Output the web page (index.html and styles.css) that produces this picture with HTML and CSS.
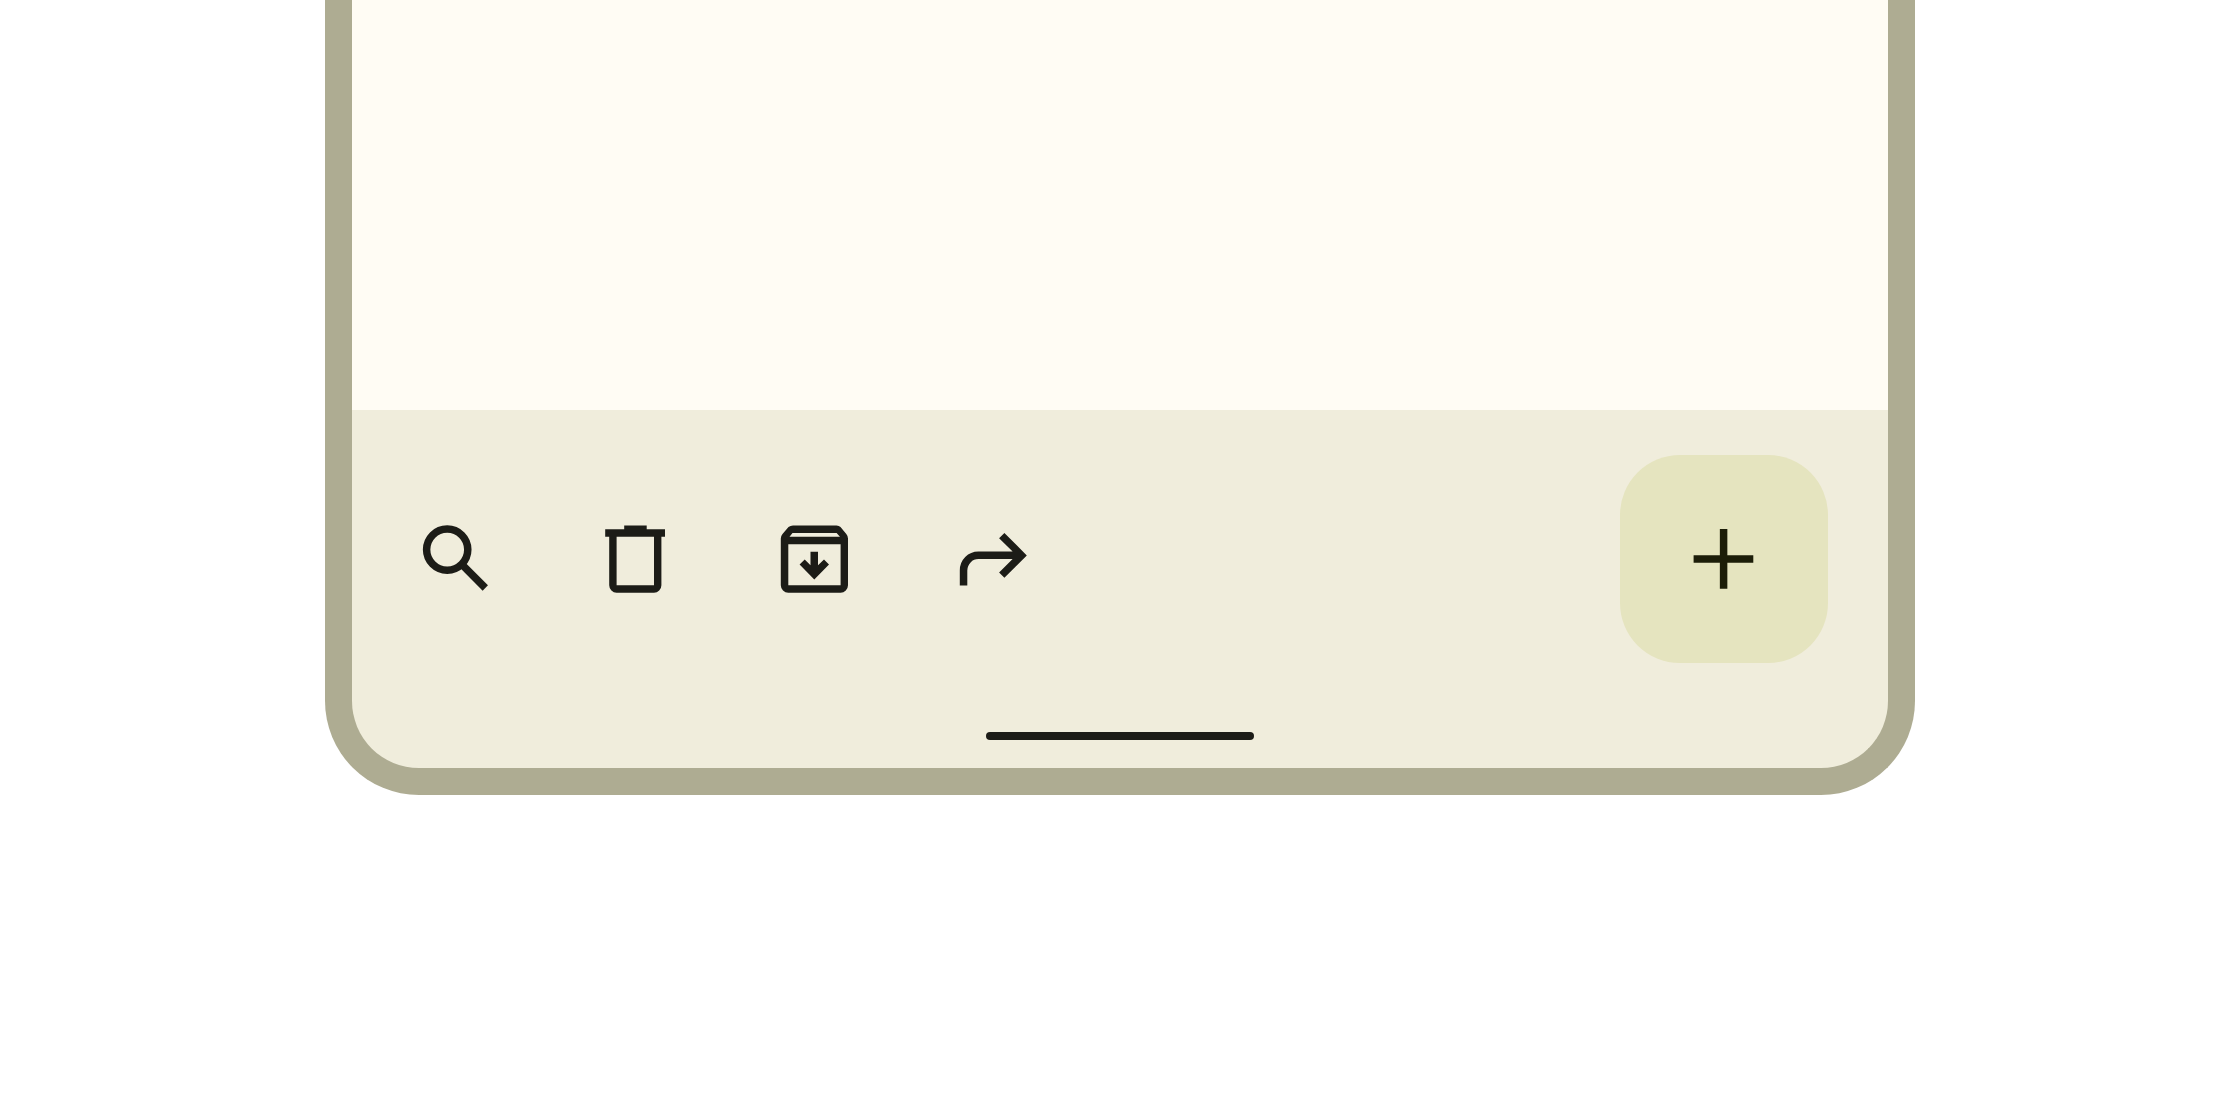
FILE: index.html
```html
<!DOCTYPE html>
<html lang="en">
<head>
<meta charset="utf-8">
<meta name="viewport" content="width=device-width, initial-scale=1">
<title>Bottom app bar</title>
<link rel="stylesheet" href="styles.css">
</head>
<body>
<div class="device">
  <main class="content"></main>
  <footer class="bottom">
    <div class="app-bar">
      <div class="actions">
        <button class="action" type="button" aria-label="Search">
          <svg class="icon" viewBox="0 0 90 90" aria-hidden="true"><g fill="none" stroke="currentColor" stroke-width="7.5"><circle cx="35.2" cy="35.6" r="20.6"/><path d="M49.8 50.4 73.3 74"/></g></svg>
        </button>
        <button class="action" type="button" aria-label="Delete">
          <svg class="icon" viewBox="0 0 90 90" aria-hidden="true"><path fill="currentColor" fill-rule="evenodd" d="M14.2 15.2H33.2V11.5H55.7V15.2H74V22.7H70.4V71.3Q70.4 74.3 68.2 76.5T63 78.7H25.6Q22.6 78.7 20.4 76.5T18.2 71.3V22.7H14.2ZM25.6 22.7V71.3H63V22.7Z"/></svg>
        </button>
        <button class="action" type="button" aria-label="Archive">
          <svg class="icon" viewBox="0 0 90 90" aria-hidden="true"><path fill="currentColor" fill-rule="evenodd" d="M23 11.4H66.5Q69 11.4 70.5 13.1L76.3 20Q78 22 78 24.6V71.3Q78 74.3 75.8 76.5T70.6 78.7H18.3Q15.2 78.7 13 76.5T10.8 71.3V24.6Q10.8 22 12.5 20L18.5 13.1Q20.4 11.4 23 11.4ZM22.5 18.9 19.5 22.8H70L66.6 18.9ZM18.3 30.2V71.3H70.6V30.2Z"/><path fill="currentColor" d="M40.5 37.7H48V51.2L54 45.5 59 50.5 44.3 65.5 29.6 50.5 34.7 45.5 40.5 51.2Z"/></svg>
        </button>
        <button class="action" type="button" aria-label="Forward">
          <svg class="icon" viewBox="0 0 90 90" aria-hidden="true"><path fill="currentColor" d="M10.8 71.5V56.4Q10.8 48.6 16.2 43.1T29.4 37.6H63.6L50.1 24.3 55.4 19 77.8 41.4 55.4 63.8 50.1 58.4 63.6 45.1H29.4Q24.8 45.1 21.6 48.4T18.3 56.4V71.5Z"/></svg>
        </button>
      </div>
      <button class="fab" type="button" aria-label="Add">
        <svg class="icon" viewBox="0 0 90 90" aria-hidden="true"><path fill="none" stroke="currentColor" stroke-width="7.5" d="M44.6 15V74.7M14.6 45H74.3"/></svg>
      </button>
    </div>
    <div class="gesture-area"><span class="gesture-handle"></span></div>
  </footer>
</div>
</body>
</html>
```
FILE: styles.css
```css
* {
  box-sizing: border-box;
}

body {
  margin: 0;
  background: #ffffff;
  font-family: Roboto, sans-serif;
}

.device {
  max-width: 1590px;
  margin: 0 auto;
  border: 27px solid #aeac92;
  border-top: 0;
  border-radius: 0 0 94px 94px;
  background: #f0eddc;
}

.content {
  min-height: 410px;
  background: #fffcf4;
}

.app-bar {
  display: flex;
  align-items: center;
  justify-content: space-between;
  min-height: 298px;
  padding: 0 60px 0 16px;
}

.actions {
  display: flex;
  gap: 1px;
}

.action,
.fab {
  display: grid;
  place-items: center;
  margin: 0;
  padding: 0;
  border: 0;
  cursor: pointer;
}

.action {
  width: 178px;
  height: 178px;
  border-radius: 50%;
  background: transparent;
  color: #1c1c17;
}

.icon {
  display: block;
  width: 90px;
  height: 90px;
}

.fab {
  width: 208px;
  height: 208px;
  border-radius: 60px;
  background: #e5e4bf;
  color: #1c1d08;
}

.gesture-area {
  display: flex;
  justify-content: center;
  min-height: 60px;
  padding-top: 24px;
}

.gesture-handle {
  width: 268px;
  height: 8px;
  border-radius: 4px;
  background: #1c1c17;
}
```
